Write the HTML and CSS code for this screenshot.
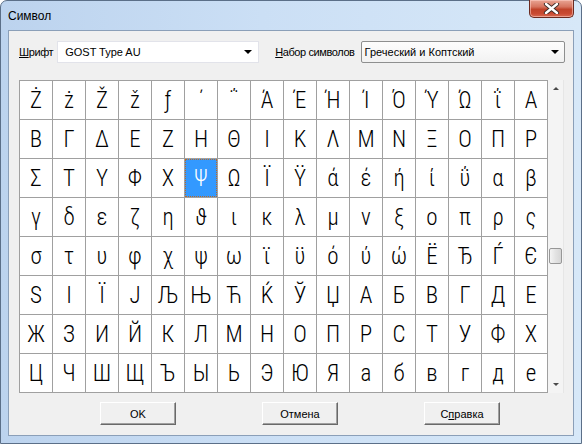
FILE: index.html
```html
<!DOCTYPE html>
<html lang="ru">
<head>
<meta charset="utf-8">
<title>Символ</title>
<link rel="stylesheet" href="styles.css">
</head>
<body>
<div class="window">
  <div class="titlebar">
    <span class="title">Символ</span>
    <div class="close">
      <svg width="17" height="11" viewBox="0 0 17 11"><path d="M3 1 L14 10 M14 1 L3 10" stroke="#3b2a26" stroke-width="4.2" stroke-linecap="round"/><path d="M3 1 L14 10 M14 1 L3 10" stroke="#ffffff" stroke-width="2.4" stroke-linecap="round"/></svg>
    </div>
  </div>
  <div class="client">
    <div class="toprow">
      <label class="lbl"><u>Ш</u>рифт</label>
      <div class="combo edit"><span>GOST Type AU</span><i class="arrow"></i></div>
      <label class="lbl lbl2"><u>Н</u>абор символов</label>
      <div class="combo drop"><span>Греческий и Коптский</span><i class="arrow"></i></div>
    </div>
    <div class="gridrow">
      <div class="grid">
        <div class="cell">Ż</div><div class="cell">ż</div><div class="cell">Ž</div><div class="cell">ž</div><div class="cell">ƒ</div><div class="cell">΄</div><div class="cell">΅</div><div class="cell">Ά</div><div class="cell">Έ</div><div class="cell">Ή</div><div class="cell">Ί</div><div class="cell">Ό</div><div class="cell">Ύ</div><div class="cell">Ώ</div><div class="cell">ΐ</div><div class="cell">Α</div>
        <div class="cell">Β</div><div class="cell">Γ</div><div class="cell">Δ</div><div class="cell">Ε</div><div class="cell">Ζ</div><div class="cell">Η</div><div class="cell">Θ</div><div class="cell">Ι</div><div class="cell">Κ</div><div class="cell">Λ</div><div class="cell">Μ</div><div class="cell">Ν</div><div class="cell">Ξ</div><div class="cell">Ο</div><div class="cell">Π</div><div class="cell">Ρ</div>
        <div class="cell">Σ</div><div class="cell">Τ</div><div class="cell">Υ</div><div class="cell">Φ</div><div class="cell">Χ</div><div class="cell sel">Ψ</div><div class="cell">Ω</div><div class="cell">Ϊ</div><div class="cell">Ϋ</div><div class="cell">ά</div><div class="cell">έ</div><div class="cell">ή</div><div class="cell">ί</div><div class="cell">ΰ</div><div class="cell">α</div><div class="cell">β</div>
        <div class="cell">γ</div><div class="cell">δ</div><div class="cell">ε</div><div class="cell">ζ</div><div class="cell">η</div><div class="cell">ϑ</div><div class="cell">ι</div><div class="cell">κ</div><div class="cell">λ</div><div class="cell">μ</div><div class="cell">ν</div><div class="cell">ξ</div><div class="cell">ο</div><div class="cell">π</div><div class="cell">ρ</div><div class="cell">ς</div>
        <div class="cell">σ</div><div class="cell">τ</div><div class="cell">υ</div><div class="cell">φ</div><div class="cell">χ</div><div class="cell">ψ</div><div class="cell">ω</div><div class="cell">ϊ</div><div class="cell">ϋ</div><div class="cell">ό</div><div class="cell">ύ</div><div class="cell">ώ</div><div class="cell">Ё</div><div class="cell">Ђ</div><div class="cell">Ѓ</div><div class="cell">Є</div>
        <div class="cell">Ѕ</div><div class="cell">І</div><div class="cell">Ї</div><div class="cell">Ј</div><div class="cell">Љ</div><div class="cell">Њ</div><div class="cell">Ћ</div><div class="cell">Ќ</div><div class="cell">Ў</div><div class="cell">Џ</div><div class="cell">А</div><div class="cell">Б</div><div class="cell">В</div><div class="cell">Г</div><div class="cell">Д</div><div class="cell">Е</div>
        <div class="cell">Ж</div><div class="cell">З</div><div class="cell">И</div><div class="cell">Й</div><div class="cell">К</div><div class="cell">Л</div><div class="cell">М</div><div class="cell">Н</div><div class="cell">О</div><div class="cell">П</div><div class="cell">Р</div><div class="cell">С</div><div class="cell">Т</div><div class="cell">У</div><div class="cell">Ф</div><div class="cell">Х</div>
        <div class="cell">Ц</div><div class="cell">Ч</div><div class="cell">Ш</div><div class="cell">Щ</div><div class="cell">Ъ</div><div class="cell">Ы</div><div class="cell">Ь</div><div class="cell">Э</div><div class="cell">Ю</div><div class="cell">Я</div><div class="cell">а</div><div class="cell">б</div><div class="cell">в</div><div class="cell">г</div><div class="cell">д</div><div class="cell">е</div>
      </div>
      <div class="scrollbar">
        <div class="sb-btn"><i class="tri up"></i></div>
        <div class="sb-track">
          <div class="sb-thumb"></div>
        </div>
        <div class="sb-btn"><i class="tri down"></i></div>
      </div>
    </div>
    <div class="buttons">
      <div class="btn">OK</div>
      <div class="btn">Отмена</div>
      <div class="btn">С<u>п</u>равка</div>
    </div>
  </div>
</div>
</body>
</html>
```

FILE: styles.css
```css
html, body {
  margin: 0;
  padding: 0;
}
body {
  width: 582px;
  height: 444px;
  overflow: hidden;
  background: #ffffff;
  font-family: "Liberation Sans", Arial, sans-serif;
  font-size: 11px;
  color: #000;
}
.window {
  width: 582px;
  height: 444px;
  box-sizing: border-box;
  display: flex;
  flex-direction: column;
  border: 1px solid #5b6f88;
  border-radius: 7px 7px 0 0;
  padding: 0 7px 7px 7px;
  background: linear-gradient(to right, #bcd3ee 0%, #cbdff5 45%, #d7e8f8 100%);
}
.titlebar {
  height: 29px;
  display: flex;
  justify-content: space-between;
  align-items: flex-start;
}
.title {
  font-size: 12px;
  padding-top: 8px;
  color: #000;
}
.close {
  width: 45px;
  height: 18px;
  margin-top: -1px;
  box-sizing: border-box;
  border: 1px solid #6b2a20;
  border-top: none;
  border-radius: 0 0 5px 5px;
  background: linear-gradient(#e9a594 0%, #d6745f 40%, #c0432a 55%, #c94a32 80%, #d86a52 100%);
  box-shadow: inset 0 0 0 1px rgba(255, 210, 200, 0.55);
  display: flex;
  align-items: center;
  justify-content: center;
}
.client {
  flex: 1;
  background: #f0f0f0;
  border: 1px solid #8b9fb8;
  padding: 10px 9px 0 10px;
  display: flex;
  flex-direction: column;
}
.toprow {
  display: flex;
  align-items: center;
  height: 22px;
}
.lbl {
  font-size: 11px;
  letter-spacing: -0.4px;
  margin-right: 4px;
  white-space: nowrap;
  flex-shrink: 0;
}
.lbl2 {
  margin-left: 16px;
  margin-right: 6px;
}
.combo {
  height: 22px;
  box-sizing: border-box;
  flex-shrink: 0;
  display: flex;
  align-items: center;
  justify-content: space-between;
  background: #ffffff;
  font-size: 11px;
  white-space: nowrap;
}
.combo.edit {
  width: 202px;
  border: 1px solid #e2e3ea;
  padding: 0 6px 0 7px;
}
.combo.drop {
  width: 204px;
  border: 1px solid #8e8f8f;
  border-radius: 2px;
  padding: 0 5px 0 3px;
  background: linear-gradient(#fdfdfd, #f2f2f2);
}
.arrow {
  width: 0;
  height: 0;
  border-left: 4px solid transparent;
  border-right: 4px solid transparent;
  border-top: 4px solid #000;
}
.gridrow {
  display: flex;
  margin-top: 17px;
  height: 313px;
}
.grid {
  display: grid;
  grid-template-columns: repeat(16, 32px);
  grid-template-rows: repeat(8, 38px);
  gap: 1px;
  border: 1px solid #a0a0a0;
  background: #a0a0a0;
  width: max-content;
}
.cell {
  background: #ffffff;
  display: flex;
  align-items: center;
  justify-content: center;
  font-family: "Roboto Condensed", "Roboto", "DejaVu Sans", sans-serif;
  font-stretch: condensed;
  font-weight: 300;
  font-size: 23px;
  color: #000;
}
.cell.sel {
  background: #3399ff;
  color: #ffffff;
  outline: 1px dotted #b86a2a;
  outline-offset: -1px;
}
.scrollbar {
  width: 16px;
  display: flex;
  flex-direction: column;
  background: #f4f4f4;
  border-right: 1px solid #e6e6e6;
}
.sb-btn {
  height: 17px;
  display: flex;
  align-items: center;
  justify-content: center;
}
.tri {
  width: 0;
  height: 0;
  border-left: 3px solid transparent;
  border-right: 3px solid transparent;
}
.tri.up {
  border-bottom: 3px solid #4a4a4a;
}
.tri.down {
  border-top: 3px solid #4a4a4a;
}
.sb-track {
  flex: 1;
  padding-top: 151px;
  padding-left: 1px;
}
.sb-thumb {
  width: 13px;
  height: 16px;
  box-sizing: border-box;
  border: 1px solid #979797;
  border-radius: 2px;
  background: linear-gradient(to right, #f4f4f4, #e3e3e3 50%, #d6d6d6);
}
.buttons {
  display: flex;
  gap: 86px;
  margin-top: 9px;
  padding-left: 81px;
}
.btn {
  width: 76px;
  height: 23px;
  box-sizing: border-box;
  display: flex;
  align-items: center;
  justify-content: center;
  font-size: 11px;
  background: #f0f0f0;
  border-top: 1px solid #ffffff;
  border-left: 1px solid #ffffff;
  border-right: 1px solid #696969;
  border-bottom: 1px solid #696969;
  box-shadow: inset -1px -1px 0 #a0a0a0;
}
```
